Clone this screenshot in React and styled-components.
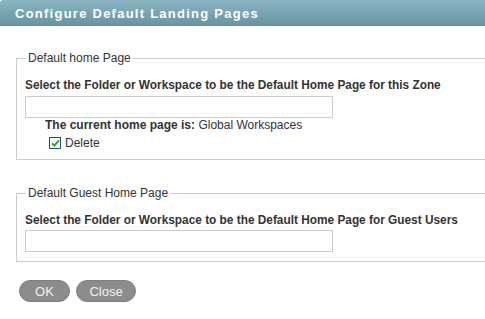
import React from "react";
import styled, { createGlobalStyle } from "styled-components";

const Global = createGlobalStyle`
  html, body { margin: 0; padding: 0; background: #fff; overflow: hidden; }
  body { font-family: "Liberation Sans", Arial, sans-serif; font-size: 12px; color: #333; }
`;

const Page = styled.div`
  width: 485px;
  height: 319px;
  overflow: hidden;
`;

const Header = styled.div`
  height: 26px;
  box-sizing: border-box;
  padding-left: 15px;
  display: flex;
  align-items: center;
  background: linear-gradient(#8ab6c3, #6893a0);
  border-top-left-radius: 3px;
  color: #fff;
  font-weight: bold;
  font-size: 13px;
  letter-spacing: 1.25px;
`;

const Body = styled.div`
  padding: 25px 0 0 16px;
`;

const Group = styled.fieldset`
  margin: 0 0 ${(p) => p.$gap || 0}px 0;
  width: 490px;
  box-sizing: border-box;
  border: 1px solid #cccccc;
  padding: 13px 8px ${(p) => p.$pb || 10}px 8px;
`;

const Legend = styled.legend`
  margin-left: 1px;
  padding: 0 2px;
  line-height: 14px;
  font-size: 12px;
  color: #333;
`;

const Label = styled.div`
  font-weight: bold;
  font-size: 11.85px;
  line-height: 14px;
  color: #333;
  margin-bottom: ${(p) => p.$mb}px;
`;

const TextInput = styled.input`
  display: block;
  width: 308px;
  height: 22px;
  box-sizing: border-box;
  border: 1px solid #cccccc;
  margin: 0;
  padding: 2px 4px;
  font-family: inherit;
  font-size: 12px;
`;

const Current = styled.div`
  padding-left: 20px;
  line-height: 15px;
  color: #333;
  b { color: #333; }
`;

const CheckRow = styled.label`
  display: flex;
  align-items: center;
  gap: 4px;
  padding-left: 24px;
  margin-top: 3px;
  line-height: 14px;
  color: #333;
`;

const Box = styled.span`
  width: 12px;
  height: 12px;
  box-sizing: border-box;
  border: 1px solid #1f4f7a;
  background: #fff;
  display: flex;
  align-items: center;
  justify-content: center;
`;

const Buttons = styled.div`
  display: flex;
  gap: 6px;
  margin: 18px 0 0 3px;
`;

const Button = styled.button`
  height: 22px;
  width: ${(p) => p.$w}px;
  border: 1px solid #808080;
  border-radius: 11px;
  background: #8c8c8c;
  color: #f2f2f2;
  font-family: "Liberation Sans", Arial, sans-serif;
  font-size: 13px;
  padding: 0;
  cursor: pointer;
`;

export default function App() {
  return (
    <Page>
      <Global />
      <Header>Configure Default Landing Pages</Header>
      <Body>
        <Group $gap={26} $pb={9}>
          <Legend>Default home Page</Legend>
          <Label $mb={4}>Select the Folder or Workspace to be the Default Home Page for this Zone</Label>
          <TextInput type="text" />
          <Current>
            <b>The current home page is: </b>Global Workspaces
          </Current>
          <CheckRow>
            <Box>
              <svg width="9" height="8" viewBox="0 0 9 8">
                <path d="M1 4.2 L3.4 6.6 L8 1.4" fill="none" stroke="#22aa22" strokeWidth="2" />
              </svg>
            </Box>
            Delete
          </CheckRow>
        </Group>
        <Group $pb={9}>
          <Legend>Default Guest Home Page</Legend>
          <Label $mb={3}>Select the Folder or Workspace to be the Default Home Page for Guest Users</Label>
          <TextInput type="text" />
        </Group>
        <Buttons>
          <Button $w={51}>OK</Button>
          <Button $w={60}>Close</Button>
        </Buttons>
      </Body>
    </Page>
  );
}
